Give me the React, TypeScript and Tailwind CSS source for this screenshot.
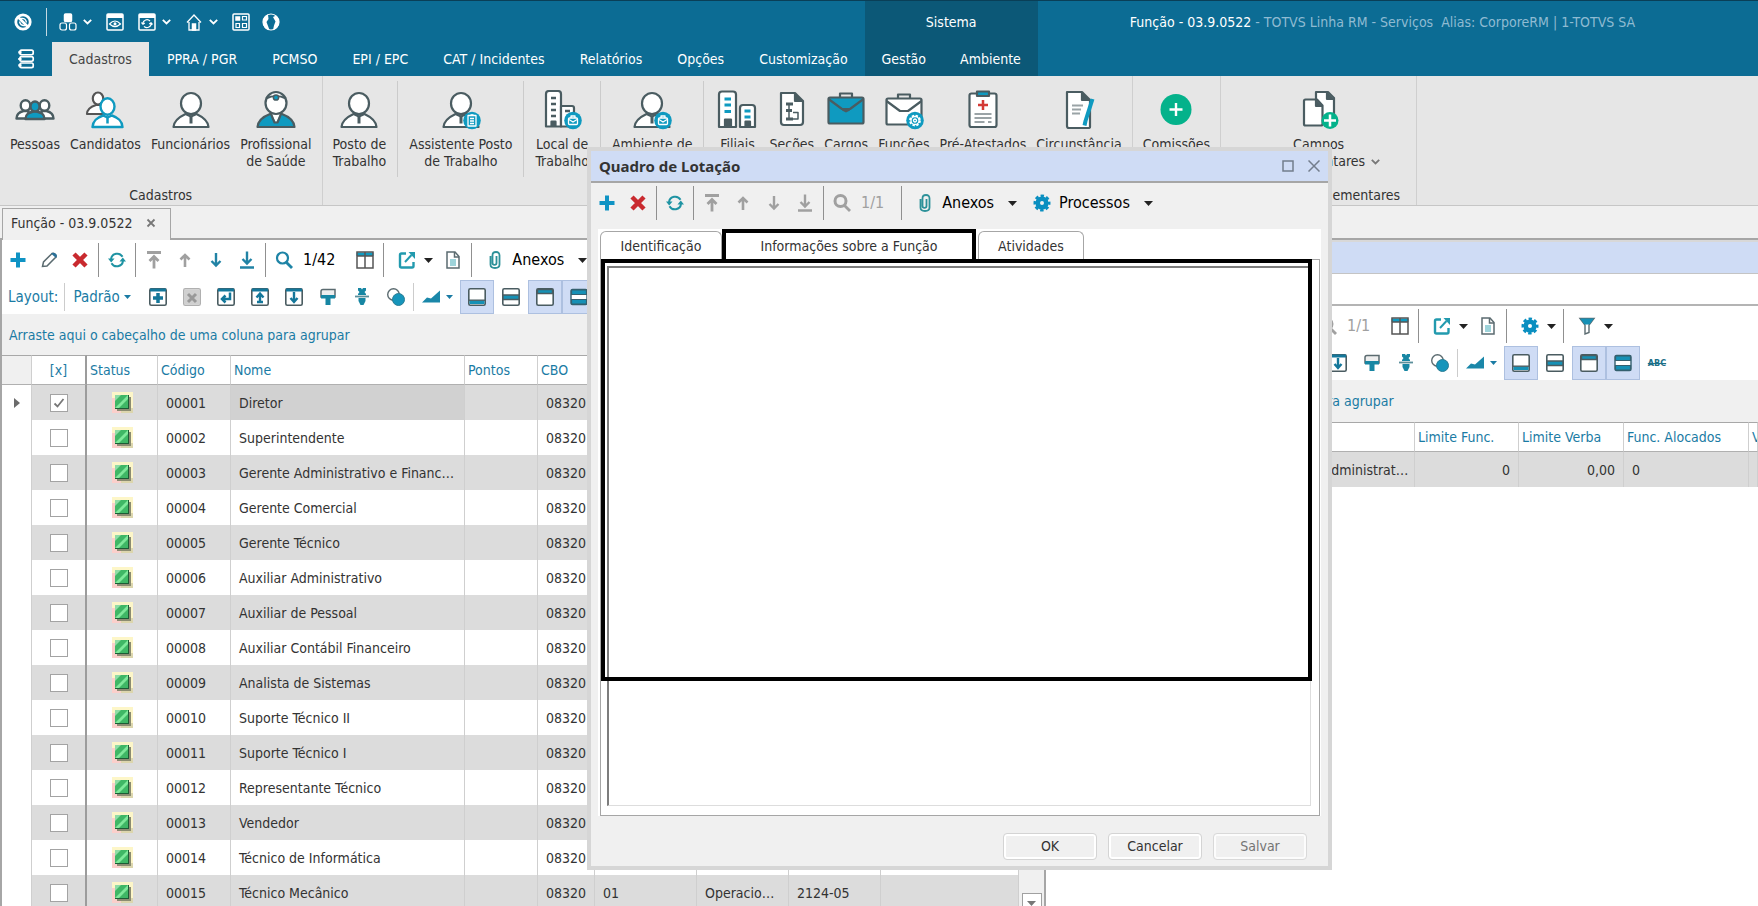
import React, { useState } from 'react';
import clsx from 'clsx';

const INK = '#4a5c61';
const TEAL = '#0f9ac0';

type IconProps = { className?: string };
type Child = { children?: React.ReactNode };

/* ---------- ribbon icons ---------- */

function Big({ children }: Child) {
  return (
    <svg viewBox="0 0 40 40" className="size-10" fill="#fff" stroke={INK} strokeWidth="2.2" strokeLinejoin="round">
      {children}
    </svg>
  );
}

function PersonShape({ stroke = INK }: { stroke?: string }) {
  return (
    <g stroke={stroke}>
      <path d="M2.500 37C3 31 7 27.500 14.500 24L20 26.500L25.500 24C33 27.500 37 31 37.500 37Z" />
      <ellipse cx="20" cy="13.500" rx="10" ry="10.500" />
      <path d="M20 27v6.500" strokeWidth="3" />
    </g>
  );
}

function Badge({ children, cx = 31, cy = 30.5 }: Child & { cx?: number; cy?: number }) {
  return (
    <g>
      <circle cx={cx} cy={cy} r="8.800" fill={TEAL} stroke="none" />
      <g transform={`translate(${cx} ${cy})`} fill="none" stroke="#fff" strokeWidth="1.300">
        {children}
      </g>
    </g>
  );
}

const bagMark = (
  <>
    <rect x="-4.500" y="-2.500" width="9" height="6.500" rx="1" />
    <path d="M-2-2.500v-2h4v2M-4-1L0 1.500L4-1" />
  </>
);

const PersonIcon = () => (
  <Big>
    <PersonShape />
  </Big>
);

const PeopleIcon = () => (
  <Big>
    <g strokeWidth="2.400">
      <path d="M1.500 28.500c0-5 3-6.500 7-7.500h5v7.500zM38.500 28.500c0-5-3-6.500-7-7.500h-5v7.500z" />
      <ellipse cx="10.500" cy="15.500" rx="4.800" ry="5.200" />
      <ellipse cx="29.500" cy="15.500" rx="4.800" ry="5.200" />
      <path d="M10.500 29c0-5 2.500-6 9.500-8c7 2 9.500 3 9.500 8z" fill={TEAL} />
      <ellipse cx="20" cy="16.500" rx="4.500" ry="5" fill={TEAL} />
    </g>
  </Big>
);

const CandidatesIcon = () => (
  <Big>
    <path d="M2 24c0-4.500 3-7 9-9h7v9z" stroke="#555" />
    <ellipse cx="13" cy="8.500" rx="5.200" ry="6" stroke="#555" />
    <g stroke={TEAL} strokeWidth="2.400">
      <path d="M7.500 37C8 31 11 28 18 25.500l4.500 2L27 25.500c7 2.500 10 5.500 10.500 11.500z" />
      <ellipse cx="22.500" cy="16.500" rx="7" ry="8.200" />
      <path d="M22.500 28v5.500" strokeWidth="2.500" />
    </g>
  </Big>
);

const DoctorIcon = () => (
  <Big>
    <path d="M1.500 37C2 31 6 27 14 24h12C34 27 38 31 38.500 37Z" fill={TEAL} />
    <path d="M15.500 24L20 33L24.500 24Z" stroke="none" />
    <path d="M15 24l3.500 8.500h3L25 24" fill="none" />
    <ellipse cx="20" cy="13" rx="10.500" ry="11" />
    <path d="M10 8.500c6-3 14-3 20 0" fill="none" />
    <circle cx="20" cy="7.500" r="2.600" fill={TEAL} strokeWidth="1.500" />
  </Big>
);

const AssistantIcon = () => (
  <Big>
    <PersonShape />
    <Badge>
      <rect x="-4" y="-5" width="8" height="10.500" />
      <path d="M-2-2h4M-2 .5h4M-2 3h4M-1.500-5.500h3" />
    </Badge>
  </Big>
);

const WorkplaceIcon = () => (
  <Big>
    <path d="M4 36.500V4q0-3 3-3h9q3 0 3 3v32.500z" />
    <path d="M19 36.500V16h11q2 0 2 2v18.500z" />
    <path d="M9 8h5M9 14h5M9 20h5M9 26h5M23 21h5" strokeWidth="2.500" />
    <path d="M9.500 36.500v-5h4v5" fill={INK} />
    <Badge>{bagMark}</Badge>
  </Big>
);

const EnvironmentIcon = () => (
  <Big>
    <PersonShape />
    <Badge>{bagMark}</Badge>
  </Big>
);

const BranchIcon = () => (
  <Big>
    <path d="M2 37V4.500q0-3 3-3h11q3 0 3 3V37z" />
    <path d="M23 37V18q0-3 3-3h9q3 0 3 3v19z" />
    <path d="M7.500 9h6.500M7.500 15h6.500M7.500 21.500h6.500M27.500 21h6M27.500 27h6" stroke={TEAL} strokeWidth="2.800" />
    <path d="M8 37v-7.500h6V37zM28.500 37v-5.500h4.500V37z" fill={INK} />
  </Big>
);

const SectionsIcon = () => (
  <Big>
    <path d="M9 3h14l8 8v21q0 3-3 3H12q-3 0-3-3z" />
    <path d="M23 3v8h8" fill={INK} />
    <path d="M17 15v14M21 22.500h5V29h-9" fill="none" strokeWidth="1.500" />
    <path d="M14 14h7M14 20.500h6M14 29h7" strokeWidth="3" />
  </Big>
);

const BriefcaseIcon = () => (
  <Big>
    <path d="M14 7V3.500h12V7" fill="none" />
    <rect x="2.500" y="7.500" width="35" height="26" rx="1.500" fill={TEAL} />
    <path d="M2.500 9L16 19h8L37.500 9" fill="none" />
    <path d="M16 18h8v2.500l-4 2l-4-2z" fill={INK} stroke="none" />
  </Big>
);

const FunctionsIcon = () => (
  <Big>
    <path d="M14 8V4.500h12V8" fill="none" />
    <rect x="2.500" y="8.500" width="35" height="26" rx="1.500" />
    <path d="M2.500 11L16 21h8L37.500 11" fill="none" />
    <Badge>
      <circle r="5" strokeWidth="1.800" strokeDasharray="2.400 1.527" />
      <circle r="4" />
      <circle r="1.500" />
    </Badge>
  </Big>
);

const CertificateIcon = () => (
  <Big>
    <rect x="6.500" y="3.500" width="27" height="33.500" rx="2" />
    <path d="M14 1.500h12V6H14z" fill={TEAL} />
    <path d="M20 10v10M15 15h10" stroke="#d33a35" strokeWidth="2.500" />
    <path d="M11.500 24h17M11.500 28h17M11.500 32h10M25 32h3.500" stroke="#9aa3a6" strokeWidth="1.800" />
  </Big>
);

const CircumstanceIcon = () => (
  <Big>
    <path d="M8 2h15l8 8v27q0 1-2 1H10q-2 0-2-2z" />
    <path d="M23 2v8h8" fill={INK} />
    <path d="M13 15.500h11M13 19.500h9M13 23.500h8" stroke="#9aa3a6" strokeWidth="2" />
    <path d="M33.500 9l-7 22l-1 4.500" stroke={TEAL} strokeWidth="4" fill="none" />
  </Big>
);

const CommitteeIcon = () => (
  <svg viewBox="0 0 40 40" className="size-10">
    <circle cx="20" cy="19.500" r="15.500" fill="#04b28b" />
    <path d="M20 13v13M13.500 19.500h13" stroke="#fff" strokeWidth="2.400" />
  </svg>
);

const FieldsIcon = () => (
  <Big>
    <path d="M17 2h12l6 6v20H17z" />
    <path d="M28 2v7h7" fill={INK} />
    <path d="M5 11q0-1.500 1.500-1.500H18l5.500 6V34q0 1.500-1.500 1.500H6.500Q5 35.500 5 34z" />
    <path d="M17 9.500V16h6.500" fill={INK} />
    <circle cx="31" cy="30.500" r="8.500" fill="#04b28b" stroke="none" />
    <path d="M31 24.500v12M25 30.500h12" stroke="#fff" strokeWidth="2.500" />
  </Big>
);

/* ---------- toolbar icons ---------- */

function Small({ children, className }: Child & IconProps) {
  return (
    <svg viewBox="0 0 18 18" className={clsx('size-[18px] shrink-0', className)} fill="none" stroke="currentColor" strokeWidth="2">
      {children}
    </svg>
  );
}

const PlusIcon = () => (
  <Small className="text-[#0f93c4]">
    <path d="M9 1.500v15M1.500 9h15" strokeWidth="4" />
  </Small>
);

const PencilIcon = () => (
  <Small className="text-[#5b6b70]">
    <path d="M2.500 15.500l1-4.500L12 2.500q2-1 3.500 1.500t-.5 3L7 15z" strokeWidth="1.500" />
    <path d="M11 2.500q2-1.500 4.500 0t.5 4.500z" fill="#2b7199" stroke="none" />
  </Small>
);

const DeleteIcon = () => (
  <Small className="text-[#c92a2f]">
    <path d="M3 3l12 12M15 3L3 15" strokeWidth="4.500" />
  </Small>
);

const RefreshIcon = () => (
  <Small className="text-[#1e93a3]">
    <path d="M3 8a6.200 6.200 0 0 1 11.500-2.200M15 10a6.200 6.200 0 0 1-11.500 2.200" />
    <path d="M0 7.500h6.500L3.200 11.500zM18 10.500h-6.500l3.300-4z" fill="currentColor" stroke="none" />
  </Small>
);

const ArrowIcon = ({ kind, on }: { kind: 'first' | 'up' | 'down' | 'last'; on?: boolean }) => (
  <Small className={on ? 'text-[#2183a5]' : 'text-[#a0a0a0]'}>
    {kind === 'first' && <path d="M2 1.500h14M9 17.500V5.500M4.500 10L9 5.500l4.500 4.500" strokeWidth="2.800" />}
    {kind === 'up' && <path d="M9 16V4M4.500 8.500L9 4l4.500 4.500" strokeWidth="2.600" />}
    {kind === 'down' && <path d="M9 2v12.500M4.500 10L9 14.500L13.500 10" strokeWidth="2.400" />}
    {kind === 'last' && <path d="M2 16.500h14M9 .5v12M4.500 8L9 12.500L13.500 8" strokeWidth="2.400" />}
  </Small>
);

const SearchIcon = ({ on }: { on?: boolean }) => (
  <Small className={on ? 'text-[#1e84a6]' : 'text-[#a0a0a0]'}>
    <circle cx="7.500" cy="7" r="5.500" strokeWidth={on ? 2.200 : 3} />
    <path d="M11.500 11.500l5.500 5.500" strokeWidth="2.800" />
  </Small>
);

const ColumnsIcon = () => (
  <Small className="text-[#555]">
    <path d="M.5 1.500h17V5H.5z" fill={TEAL} stroke="none" />
    <path d="M1 1h16v16H1zM9 1v16M1 5h16" strokeWidth="1.500" />
  </Small>
);

const ExportIcon = () => (
  <Small className="text-[#229aae]">
    <path d="M8 2.500H3.500Q2 2.500 2 4v11q0 1.500 1.500 1.500h10.500q1.500 0 1.500-1.500v-4" strokeWidth="2.400" />
    <path d="M7 11l6.500-7" />
    <path d="M10.500 1H17v7z" fill="currentColor" stroke="none" />
  </Small>
);

const DocIcon = () => (
  <Small className="text-[#5b6b70]">
    <path d="M3 1h8l4 4.500V17H3z" strokeWidth="1.500" />
    <path d="M10.500 1v5H15" strokeWidth="1.500" />
    <path d="M6 8h6v7H6z" fill="#9dd3da" stroke="none" />
  </Small>
);

const ClipIcon = () => (
  <Small className="text-[#2d9199]">
    <path d="M4.500 5v8.500q0 3.500 4.500 3.500t4.500-3.500V4.500Q13.500 1 10 1T6.500 4.500V12q0 1.800 2 1.800T10.500 12V5" strokeWidth="1.800" />
  </Small>
);

const GearIcon = () => (
  <Small className="text-[#0a8fc0]">
    <circle cx="9" cy="9" r="4.300" strokeWidth="4.600" />
    <circle cx="9" cy="9" r="7" strokeWidth="3" strokeDasharray="3.300 2.198" strokeDashoffset="1.600" />
  </Small>
);

const FilterIcon = () => (
  <Small className="text-[#5b6b70]">
    <path d="M2 1.500h14l-5 6.500v7.500l-4 1.500V8z" strokeWidth="1.400" />
    <path d="M2 1.500h14l-4.500 6h-5z" fill="#1690b5" stroke="none" />
  </Small>
);

const Caret = ({ className = 'text-[#222]' }: IconProps) => (
  <svg viewBox="0 0 9 5" className={clsx('h-[5px] w-[9px] shrink-0', className)} fill="currentColor">
    <path d="M0 0h9L4.500 5z" />
  </svg>
);

const Chevron = ({ className }: IconProps) => (
  <svg viewBox="0 0 9 6" className={clsx('h-1.5 w-[9px] shrink-0', className)} fill="none" stroke="currentColor" strokeWidth="1.800">
    <path d="M.8.8L4.500 4.500L8.200.8" />
  </svg>
);

/* ---------- layout bar icons ---------- */

const Frame = ({ children, className = 'text-[#4a5c61]' }: Child & IconProps) => (
  <Small className={className}>
    <rect x=".8" y=".8" width="16.400" height="16.400" rx="1.500" fill="#fff" strokeWidth="1.600" />
    {children}
  </Small>
);

const topBar = <path d="M1 2h16" stroke="#14779a" strokeWidth="3" />;

const layoutTools: { label: string; icon: React.ReactNode }[] = [
  { label: 'Novo layout', icon: <Frame>{topBar}<path d="M9 5v10M4 10h10" stroke="#14779a" strokeWidth="3.500" /></Frame> },
  {
    label: 'Excluir layout',
    icon: (
      <Frame className="text-[#b0b0b0]">
        <path d="M1 1.500h16v15H1z" fill="#d0d0d0" stroke="none" />
        <path d="M5 6l8 8M13 6l-8 8" stroke="#999" strokeWidth="3" />
      </Frame>
    ),
  },
  { label: 'Restaurar layout', icon: <Frame>{topBar}<path d="M13 4.500V11H6.500M8.500 7.500L5 11l3.500 3.500" stroke="#14779a" strokeWidth="2.500" /></Frame> },
  { label: 'Exportar layout', icon: <Frame>{topBar}<path d="M9 15V6M5.500 9.500L9 5.500l3.500 4M6 14h6" stroke="#14779a" strokeWidth="2.400" /></Frame> },
  { label: 'Importar layout', icon: <Frame>{topBar}<path d="M9 4v9M5.500 10L9 14l3.500-4" stroke="#14779a" strokeWidth="2.400" /></Frame> },
  {
    label: 'Formatar',
    icon: (
      <Small className="text-[#5b6b70]">
        <path d="M2 9V3.500q0-2 2-2h12V9z" fill="#eee" strokeWidth="1.500" />
        <path d="M2 7h14v3.500h-4.500V17h-5v-6.500H2z" fill="#1786a3" stroke="none" />
      </Small>
    ),
  },
  {
    label: 'Fixar',
    icon: (
      <Small className="text-[#5b8f9b]">
        <path d="M5 0h3l1 1.500L10 0h3v2.500L11.500 4L13 6v1H5V6l1.500-2L5 2.500zM5.500 10h7v3l-2 4h-3l-2-4z" fill="#1786a3" stroke="none" />
        <path d="M2 8.500h14" strokeWidth="1.800" />
      </Small>
    ),
  },
  {
    label: 'Interseção',
    icon: (
      <Small className="text-[#5b6b70]">
        <circle cx="6.500" cy="6.500" r="5.800" fill="#fff" strokeWidth="1.400" />
        <circle cx="11.500" cy="11.500" r="6" fill="#1695bb" stroke="#2b7d94" strokeWidth="1" />
      </Small>
    ),
  },
];

const viewModes: { label: string; icon: React.ReactNode }[] = [
  { label: 'Rodapé', icon: <Frame><path d="M1.500 12.500h15V16h-15z" fill="#1690b5" stroke="none" /><path d="M1 12.200h16" strokeWidth="1.400" /></Frame> },
  { label: 'Linha nova', icon: <Frame><path d="M1 7h16v4.500H1z" fill="#1690b5" strokeWidth="1.400" /></Frame> },
  { label: 'Agrupamento', icon: <Frame><path d="M1.500 1.500h15v4h-15z" fill="#1690b5" strokeWidth="1.400" /></Frame> },
  {
    label: 'Zebrado',
    icon: (
      <Small className="text-[#35606f]">
        <rect x="1" y="1.500" width="16" height="15" rx="1.500" fill="#fff" strokeWidth="1.400" />
        <path d="M1.500 2h15v4.500h-15zM1.500 11.500h15V16h-15z" fill="#1690b5" strokeWidth="1.200" />
      </Small>
    ),
  },
];

/* ---------- header ---------- */

const White = ({ children, className = 'size-[18px]' }: Child & IconProps) => (
  <svg viewBox="0 0 18 18" className={clsx('shrink-0', className)} fill="none" stroke="#fff" strokeWidth="1.500">
    {children}
  </svg>
);

function QuickAccess() {
  return (
    <div className="flex h-[41px] items-center pl-3.5 text-white">
      <button aria-label="TOTVS">
        <White>
          <circle cx="9" cy="9" r="7.200" strokeWidth="2.800" />
          <path d="M4 4l10 10" strokeWidth="2.600" />
          <path d="M7 5.500q4.500-1 5.500 4M5.500 8.500q1 4.500 5.500 4" strokeWidth="1.300" />
        </White>
      </button>
      <span className="mr-3 ml-3.5 h-7 w-px bg-[#c5d9e2]" />
      <button className="flex items-center gap-1.5" aria-label="Módulos">
        <White>
          <rect x="5.500" y="1" width="7" height="7.500" rx="1" fill="#fff" />
          <rect x="1" y="10" width="6.500" height="7" rx="2" strokeWidth="1.200" />
          <rect x="10.500" y="10" width="6.500" height="7" rx="2" strokeWidth="1.200" />
        </White>
        <Chevron />
      </button>
      <button className="ml-3.5" aria-label="Visualizar">
        <White>
          <rect x="1" y="1" width="16" height="16" rx="1" />
          <path d="M1 3h16" strokeWidth="4" />
          <path d="M3.500 11q5.500-6 11 0q-5.500 5-11 0z" strokeWidth="1.200" />
          <circle cx="9" cy="10.800" r="1.500" fill="#fff" stroke="none" />
        </White>
      </button>
      <button className="ml-3.5 flex items-center gap-1.5" aria-label="Atualizar">
        <White>
          <rect x="1" y="1" width="16" height="16" rx="1" />
          <path d="M1 3h16" strokeWidth="4" />
          <path d="M4.800 10.500A4.200 4.200 0 0 1 12 8M13.200 10.500A4.200 4.200 0 0 1 6 13.300M3.500 9.500l1.500 1.700l1.800-1.200M14.500 11.500L13 9.800l-1.800 1.200" strokeWidth="1.200" />
        </White>
        <Chevron />
      </button>
      <button className="ml-3.5 flex items-center gap-1.5" aria-label="Início">
        <White>
          <path d="M2 9.500L9 2l7 7.500M4 9v8h10V9" strokeWidth="1.300" />
          <path d="M7.500 17v-6h3v6z" fill="#fff" />
        </White>
        <Chevron />
      </button>
      <button className="ml-3.5" aria-label="Painel">
        <White>
          <rect x="1" y="1" width="16" height="16" rx="1" />
          <path d="M4 4h3.500v3H4z" fill="#fff" />
          <path d="M10.500 3.500h4v3.500h-4zM4 10.500h3.500v4H4zM10.500 10.500h4v4h-4z" strokeWidth="1.200" />
        </White>
      </button>
      <button className="ml-3" aria-label="Idioma">
        <White>
          <circle cx="9" cy="9" r="8" strokeWidth="1.200" />
          <path d="M1 9Q1 3.500 6 1.500L6.500 6L4.500 9l3 8Q1 16 1 9zM11 4l3-1.500q3 3 3 6.500q0 6-6 8l1-4.500l1.500-4z" fill="#fff" stroke="none" />
        </White>
      </button>
    </div>
  );
}

const menus = ['PPRA / PGR', 'PCMSO', 'EPI / EPC', 'CAT / Incidentes', 'Relatórios', 'Opções', 'Customização'];

function TopBar() {
  return (
    <header className="flex h-[76px] border-t border-[#0a3f57] bg-[#0c6c94] text-white">
      <div>
        <QuickAccess />
        <nav className="flex h-[34px] items-stretch gap-px whitespace-nowrap">
          <button className="flex w-[51px] items-center justify-center" aria-label="Menu principal">
            <White className="size-5">
              <rect x="3.500" y="1" width="12" height="4.200" rx="1.500" />
              <rect x="3.500" y="6.800" width="12" height="4.200" rx="1.500" />
              <rect x="3.500" y="12.600" width="12" height="4.200" rx="1.500" />
              <path d="M2 3h3M2 9h3M2 14.700h3" strokeWidth="2" />
            </White>
          </button>
          <button className="bg-[#e6e6e6] px-[17px] text-[#444]">Cadastros</button>
          {menus.map((m) => (
            <button key={m} className="px-[17px]">
              {m}
            </button>
          ))}
        </nav>
      </div>
      <div className="bg-[#0c5877]">
        <div className="flex h-[41px] items-center justify-center">Sistema</div>
        <nav className="flex h-[34px]">
          <button className="px-[17px]">Gestão</button>
          <button className="px-[17px]">Ambiente</button>
        </nav>
      </div>
      <div className="flex h-[41px] items-center pl-[92px] whitespace-pre">
        Função - 03.9.0522
        <span className="text-[#8fbbd2]"> - TOTVS Linha RM - Serviços  Alias: CorporeRM | 1-TOTVS SA</span>
      </div>
    </header>
  );
}

/* ---------- ribbon ---------- */

function RibbonButton({ icon, lines, menu }: { icon: React.ReactNode; lines: string[]; menu?: boolean }) {
  return (
    <button className="flex min-w-[54px] flex-col items-center gap-1.5 self-start px-[5px] pt-3.5">
      {icon}
      <span className="leading-[17px] whitespace-nowrap">
        {lines.map((l, i) => (
          <span key={l} className="flex items-center justify-center gap-1.5">
            {l}
            {menu && i === lines.length - 1 && <Chevron className="text-[#777]" />}
          </span>
        ))}
      </span>
    </button>
  );
}

function RibbonGroup({ label, children, className }: Child & { label?: string; className?: string }) {
  return (
    <section className={clsx('flex shrink-0 flex-col justify-between border-r border-[#cfcfcf] px-[5px]', className)}>
      <div className="flex justify-center">{children}</div>
      {label && <div className="text-center leading-5 whitespace-nowrap">{label}</div>}
    </section>
  );
}

const RibbonSplit = () => <span className="mx-1.5 mt-[5px] h-24 w-px shrink-0 bg-[#cbcbcb]" />;

function Ribbon() {
  return (
    <div className="flex h-[130px] border-b border-[#c6c6c6] bg-[#e6e6e6] text-[#333]">
      <RibbonGroup label="Cadastros">
        <RibbonButton icon={<PeopleIcon />} lines={['Pessoas']} />
        <RibbonButton icon={<CandidatesIcon />} lines={['Candidatos']} />
        <RibbonButton icon={<PersonIcon />} lines={['Funcionários']} />
        <RibbonButton icon={<DoctorIcon />} lines={['Profissional', 'de Saúde']} />
      </RibbonGroup>
      <RibbonGroup>
        <RibbonButton icon={<PersonIcon />} lines={['Posto de', 'Trabalho']} />
        <RibbonSplit />
        <RibbonButton icon={<AssistantIcon />} lines={['Assistente Posto', 'de Trabalho']} />
        <RibbonSplit />
        <RibbonButton icon={<WorkplaceIcon />} lines={['Local de', 'Trabalho']} />
        <RibbonSplit />
        <RibbonButton icon={<EnvironmentIcon />} lines={['Ambiente de', 'Trabalho']} />
        <RibbonSplit />
        <RibbonButton icon={<BranchIcon />} lines={['Filiais']} />
        <RibbonButton icon={<SectionsIcon />} lines={['Seções']} />
        <RibbonButton icon={<BriefcaseIcon />} lines={['Cargos']} />
        <RibbonButton icon={<FunctionsIcon />} lines={['Funções']} />
        <RibbonButton icon={<CertificateIcon />} lines={['Pré-Atestados']} />
        <RibbonButton icon={<CircumstanceIcon />} lines={['Circunstância']} />
      </RibbonGroup>
      <RibbonGroup>
        <RibbonButton icon={<CommitteeIcon />} lines={['Comissões']} />
      </RibbonGroup>
      <RibbonGroup label="Campos Complementares" className="w-[196px]">
        <RibbonButton icon={<FieldsIcon />} lines={['Campos', 'Complementares']} menu />
      </RibbonGroup>
    </div>
  );
}

/* ---------- toolbars ---------- */

function Tool({ label, children, disabled }: Child & { label: string; disabled?: boolean }) {
  return (
    <button className="flex h-[34px] w-[31px] shrink-0 items-center justify-center" aria-label={label} disabled={disabled}>
      {children}
    </button>
  );
}

function MenuTool({ label, icon, text }: { label: string; icon: React.ReactNode; text?: string }) {
  return (
    <button className="flex h-[34px] shrink-0 items-center gap-2 pr-1 pl-3" aria-label={label}>
      {icon}
      {text}
      <Caret className={clsx('text-[#222]', text && 'ml-1.5')} />
    </button>
  );
}

const Split = () => <span className="mr-0.5 ml-[3px] h-[34px] w-px shrink-0 bg-[#909090]" />;

function RecordNav({ position, active, editable }: { position: string; active?: boolean; editable?: boolean }) {
  return (
    <>
      <Tool label="Incluir"><PlusIcon /></Tool>
      {editable && <Tool label="Editar"><PencilIcon /></Tool>}
      <Tool label="Excluir"><DeleteIcon /></Tool>
      <Split />
      <Tool label="Atualizar"><RefreshIcon /></Tool>
      <Split />
      <Tool label="Primeiro" disabled><ArrowIcon kind="first" /></Tool>
      <Tool label="Anterior" disabled><ArrowIcon kind="up" /></Tool>
      <Tool label="Próximo" disabled={!active}><ArrowIcon kind="down" on={active} /></Tool>
      <Tool label="Último" disabled={!active}><ArrowIcon kind="last" on={active} /></Tool>
      <Split />
      <Tool label="Localizar" disabled={!active}><SearchIcon on={active} /></Tool>
      <span className={clsx('pr-3.5 pl-1', active ? 'text-black' : 'text-[#a0a0a0]')}>{position}</span>
    </>
  );
}

function LayoutBar({ spell }: { spell?: boolean }) {
  const [on, setOn] = useState([true, false, true, true]);
  return (
    <div className="flex h-[34px] shrink-0 items-center pl-1.5 text-[15px] text-[#1a7ba4]">
      <div className="flex w-[133px] shrink-0 items-center">
        <span>Layout:</span>
        <span className="mr-2 ml-1.5 h-7 w-px bg-[#ccc]" />
        <button className="flex items-center gap-1">
          Padrão
          <svg viewBox="0 0 7 4" className="h-1 w-[7px]" fill="currentColor"><path d="M0 0h7L3.500 4z" /></svg>
        </button>
      </div>
      {layoutTools.map((t) => (
        <button key={t.label} className="flex w-[34px] shrink-0 justify-center" aria-label={t.label}>
          {t.icon}
        </button>
      ))}
      <span className="h-7 w-px shrink-0 bg-[#ccc]" />
      <button className="flex w-[46px] shrink-0 items-center justify-center gap-1.5" aria-label="Gráfico">
        <Small>
          <path d="M0 14.500l5-5l4 1l9-8v12z" fill="#1a87a9" stroke="none" />
        </Small>
        <svg viewBox="0 0 7 4" className="h-1 w-[7px]" fill="currentColor"><path d="M0 0h7L3.500 4z" /></svg>
      </button>
      {viewModes.map((v, i) => (
        <button
          key={v.label}
          aria-label={v.label}
          aria-pressed={on[i]}
          onClick={() => setOn(on.map((x, k) => (k === i ? !x : x)))}
          className={clsx(
            'flex h-[34px] w-[34px] shrink-0 items-center justify-center border',
            on[i] ? 'border-[#adc0e0] bg-[#cfdcf5]' : 'border-transparent',
          )}
        >
          {v.icon}
        </button>
      ))}
      {spell && (
        <button className="w-[34px] shrink-0 text-center text-[9px] font-bold text-[#1c6f88] line-through">ABC</button>
      )}
    </div>
  );
}

/* ---------- left panel ---------- */

const functions = [
  'Diretor',
  'Superintendente',
  'Gerente Administrativo e Financeiro',
  'Gerente Comercial',
  'Gerente Técnico',
  'Auxiliar Administrativo',
  'Auxiliar de Pessoal',
  'Auxiliar Contábil Financeiro',
  'Analista de Sistemas',
  'Suporte Técnico II',
  'Suporte Técnico I',
  'Representante Técnico',
  'Vendedor',
  'Técnico de Informática',
  'Técnico Mecânico',
];

const StatusMark = () => (
  <svg viewBox="0 0 21 21" className="mx-auto size-[21px]">
    <path d="M0 0h21v21H0z" fill="#fdf6c8" />
    <path d="M0 6h10v15H0z" fill="#fbcfcb" />
    <path d="M9 16h12v5H9z" fill="#dcd6ae" />
    <path d="M5 5h14v14H5z" fill="#8b8c72" />
    <path d="M3 3h14v14H3z" fill="#1c5c35" />
    <path d="M3 3h13v13H3z" fill="#3fb765" />
    <path d="M3 16L16 3v4L7 16z" fill="#7fe89a" />
    <path d="M3 3h6l-6 6z" fill="#8fdba6" />
  </svg>
);

const thBase = 'h-[30px] overflow-hidden border-t border-b border-t-[#a8a8a8] border-b-[#b0b0b0] px-[3px] font-normal text-[#1a7ba4]';
const th = clsx(thBase, 'border-r border-r-[#cfcfcf] bg-white text-left');
const td = 'h-[35px] truncate border-r border-[#cfcfcf] px-2';

function FunctionGrid() {
  const [checked, setChecked] = useState<number[]>([0]);
  const toggle = (i: number) => setChecked(checked.includes(i) ? checked.filter((c) => c !== i) : [...checked, i]);

  return (
    <table className="w-full table-fixed border-separate border-spacing-0 text-[#333]">
      <colgroup>
        <col className="w-[30px]" />
        <col className="w-[55px]" />
        <col className="w-[71px]" />
        <col className="w-[73px]" />
        <col className="w-[234px]" />
        <col className="w-[73px]" />
        <col className="w-[57px]" />
        <col className="w-[102px]" />
        <col className="w-[92px]" />
        <col className="w-[92px]" />
        <col />
      </colgroup>
      <thead>
        <tr>
          <th className={clsx(thBase, 'border-r border-r-[#cfcfcf] bg-[#f0f0f0]')} />
          <th className={clsx(thBase, 'border-r-2 border-r-[#9c9c9c] bg-white text-center')}>[x]</th>
          <th className={th}>Status</th>
          <th className={th}>Código</th>
          <th className={th}>Nome</th>
          <th className={th}>Pontos</th>
          <th className={th}>CBO</th>
          <th className={th} />
          <th className={th} />
          <th className={th} />
          <th className={th} />
        </tr>
      </thead>
      <tbody>
        {functions.map((name, i) => (
          <tr key={name} className={i % 2 === 0 ? 'bg-[#dcdcdc]' : 'bg-white'}>
            <td className="border-r border-[#cfcfcf] bg-white">
              {i === 0 && (
                <svg viewBox="0 0 6 10" className="mx-auto h-2.5 w-1.5" fill="#6b6b6b"><path d="M0 0l6 5l-6 5z" /></svg>
              )}
            </td>
            <td className="border-r-2 border-[#9c9c9c]">
              <label className="relative mx-auto block size-[18px]">
                <input
                  type="checkbox"
                  aria-label={name}
                  checked={checked.includes(i)}
                  onChange={() => toggle(i)}
                  className="block size-[18px] appearance-none border border-[#a3a3a3] bg-white"
                />
                {checked.includes(i) && (
                  <svg viewBox="0 0 18 18" className="pointer-events-none absolute inset-0" fill="none" stroke="#777" strokeWidth="1.800">
                    <path d="M4.500 9.500l3 3l6-7.500" />
                  </svg>
                )}
              </label>
            </td>
            <td className="border-r border-[#cfcfcf]"><StatusMark /></td>
            <td className={td}>{String(i + 1).padStart(5, '0')}</td>
            <td className={clsx(td, i === 0 && 'bg-[#d1d1d1]')}>{name}</td>
            <td className={td} />
            <td className="h-[35px] overflow-hidden border-r border-[#cfcfcf] pl-2">08320</td>
            <td className={td}>01</td>
            <td className={td}>Operacional</td>
            <td className={td}>2124-05</td>
            <td className={td} />
          </tr>
        ))}
      </tbody>
    </table>
  );
}

function FunctionPanel() {
  return (
    <main className="flex w-[1046px] shrink-0 flex-col border-x-2 border-[#a6a6a6] bg-white">
      <div className="flex h-10 shrink-0 items-center text-[16px] text-black">
        <RecordNav position="1/42" active editable />
        <Tool label="Colunas"><ColumnsIcon /></Tool>
        <Split />
        <MenuTool label="Exportar" icon={<ExportIcon />} />
        <Tool label="Relatório"><DocIcon /></Tool>
        <Split />
        <MenuTool label="Anexos" icon={<ClipIcon />} text="Anexos" />
      </div>
      <LayoutBar />
      <div className="flex h-[41px] shrink-0 items-center bg-[#f0f0f0] pl-[7px] text-[#1a7ba4]">
        Arraste aqui o cabeçalho de uma coluna para agrupar
      </div>
      <div className="flex min-h-0 flex-1 overflow-hidden">
        <div className="min-w-0 flex-1">
          <FunctionGrid />
        </div>
        <div className="flex w-[25px] shrink-0 flex-col items-center justify-end bg-[#f0f0f0]">
          <button className="flex h-[13px] w-5 items-end justify-center border border-b-0 border-[#a0a0a0] bg-white" aria-label="Rolar para baixo">
            <Caret className="text-[#777]" />
          </button>
        </div>
      </div>
    </main>
  );
}

/* ---------- right panel ---------- */

function StaffingPanel() {
  return (
    <aside className="flex min-w-0 flex-1 flex-col overflow-hidden bg-white">
      <div className="h-[34px] shrink-0 border-t-2 border-b border-t-[#d8d8d8] border-b-[#c4c4c4] bg-[#cfdcf5]" />
      <div className="h-8 shrink-0 border-b-2 border-[#b4b4b4]" />
      <div className="flex h-10 shrink-0 items-center text-[16px]">
        <RecordNav position="1/1" editable />
        <Tool label="Colunas"><ColumnsIcon /></Tool>
        <Split />
        <MenuTool label="Exportar" icon={<ExportIcon />} />
        <Tool label="Relatório"><DocIcon /></Tool>
        <Split />
        <MenuTool label="Processos" icon={<GearIcon />} />
        <Split />
        <MenuTool label="Filtro" icon={<FilterIcon />} />
      </div>
      <LayoutBar spell />
      <div className="flex h-[42px] shrink-0 items-center bg-[#f0f0f0] pl-[7px] text-[#1a7ba4]">
        Arraste aqui o cabeçalho de uma coluna para agrupar
      </div>
      <table className="w-full table-fixed border-separate border-spacing-0 text-[#333]">
        <colgroup>
          <col className="w-[29px]" />
          <col className="w-[55px]" />
          <col className="w-[130px]" />
          <col className="w-[155px]" />
          <col className="w-[104px]" />
          <col className="w-[105px]" />
          <col className="w-[125px]" />
          <col />
        </colgroup>
        <thead>
          <tr>
            <th className={th} />
            <th className={th}>[x]</th>
            <th className={th}>Código</th>
            <th className={th}>Seção</th>
            <th className={th}>Limite Func.</th>
            <th className={th}>Limite Verba</th>
            <th className={th}>Func. Alocados</th>
            <th className={th}>V</th>
          </tr>
        </thead>
        <tbody>
          <tr className="bg-[#dcdcdc]">
            <td className={td} />
            <td className={td} />
            <td className={td}>01</td>
            <td className="h-[35px] truncate border-r border-[#cfcfcf] pr-1 pl-2">Gerente Administrativo</td>
            <td className={clsx(td, 'text-right')}>0</td>
            <td className={clsx(td, 'text-right')}>0,00</td>
            <td className={td}>0</td>
            <td className={td} />
          </tr>
        </tbody>
      </table>
    </aside>
  );
}

/* ---------- dialog ---------- */

const dialogButton = 'h-[27px] w-[94px] rounded border border-[#d4d4d4] bg-[#f0f0f0] ring-2 ring-white ring-inset';

function StaffingDialog() {
  const [notes, setNotes] = useState('');
  return (
    <div role="dialog" aria-label="Quadro de Lotação" className="absolute top-[147px] left-[587px] flex h-[723px] w-[745px] flex-col border-4 border-[#d6d6d6] bg-[#f0f0f0]">
      <div className="flex h-8 shrink-0 items-center border-b-2 border-[#a6a6a6] bg-[#cfdcf5] pr-2 pl-2">
        <h2 className="flex-1 font-['Noto_Sans',sans-serif] text-[15px] font-bold text-[#333]">Quadro de Lotação</h2>
        <button className="mr-3.5" aria-label="Maximizar">
          <svg viewBox="0 0 12 12" className="size-3" fill="none" stroke="#737d8c" strokeWidth="1.500"><path d="M1 1h10v10H1z" /></svg>
        </button>
        <button aria-label="Fechar">
          <svg viewBox="0 0 12 12" className="size-3" fill="none" stroke="#737d8c" strokeWidth="1.500"><path d="M.5.5l11 11M11.500.5l-11 11" /></svg>
        </button>
      </div>
      <div className="flex h-10 shrink-0 items-center text-[16px] text-black">
        <RecordNav position="1/1" />
        <Split />
        <MenuTool label="Anexos" icon={<ClipIcon />} text="Anexos" />
        <MenuTool label="Processos" icon={<GearIcon />} text="Processos" />
      </div>
      <div className="mx-[7px] mt-1.5 flex min-h-0 flex-1 flex-col bg-white">
        <div role="tablist" className="flex h-[30px] shrink-0 items-end pl-0.5 text-[#333]">
          <button role="tab" className="h-7 w-[122px] rounded-t-md border border-b-0 border-[#a6a6a6]">Identificação</button>
          <button role="tab" aria-selected className="h-[30px] w-[254px] border-4 border-b-0 border-black">Informações sobre a Função</button>
          <button role="tab" className="ml-0.5 h-7 w-[106px] rounded-t-md border border-b-0 border-[#a6a6a6]">Atividades</button>
        </div>
        <div className="relative mr-px ml-0.5 flex min-h-0 flex-1 border border-[#a6a6a6] p-1.5 pr-2 pb-[9px]">
          <textarea
            aria-label="Informações sobre a Função"
            value={notes}
            onChange={(e) => setNotes(e.target.value)}
            className="flex-1 resize-none border-t-2 border-r border-b border-l-2 border-t-[#7d7d7d] border-r-[#ddd] border-b-[#ddd] border-l-[#7d7d7d] bg-white outline-none"
          />
          <span className="pointer-events-none absolute -top-px right-[7px] bottom-[134px] left-0 border-4 border-black" />
        </div>
      </div>
      <div className="flex h-[50px] shrink-0 items-center justify-end gap-[11px] pt-2.5 pr-[21px]">
        <button className={dialogButton}>OK</button>
        <button className={dialogButton}>Cancelar</button>
        <button className={clsx(dialogButton, 'text-[#555] opacity-80')} disabled>Salvar</button>
      </div>
    </div>
  );
}

export default function App() {
  return (
    <div className="relative flex h-screen flex-col overflow-hidden bg-[#f0f0f0] font-['DejaVu_Sans_Condensed','DejaVu_Sans',sans-serif] text-[14px] leading-5 text-[#333]">
      <TopBar />
      <Ribbon />
      <div className="flex h-[34px] shrink-0 items-stretch border-b-2 border-[#a6a6a6] pt-0.5 pl-0.5">
        <div className="-mb-0.5 flex w-[169px] items-center gap-3.5 border border-b-0 border-[#a6a6a6] bg-[#f0f0f0] pb-1 pl-2">
          Função - 03.9.0522
          <button aria-label="Fechar aba">
            <svg viewBox="0 0 10 10" className="size-2.5" fill="none" stroke="#777" strokeWidth="1.800"><path d="M1.500 1.500l7 7M8.500 1.500l-7 7" /></svg>
          </button>
        </div>
      </div>
      <div className="flex min-h-0 flex-1">
        <FunctionPanel />
        <StaffingPanel />
      </div>
      <StaffingDialog />
    </div>
  );
}
